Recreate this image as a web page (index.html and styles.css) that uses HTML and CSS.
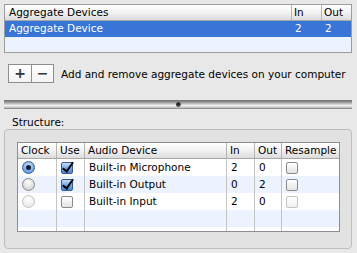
FILE: index.html
```html
<!DOCTYPE html>
<html lang="en">
<head>
    <meta charset="UTF-8">
    <title>Audio MIDI Setup</title>
    <link rel="stylesheet" href="styles.css">
</head>
<body>
    <div class="pane">
        <div class="list devices">
            <div class="row head">
                <div class="cell">Aggregate Devices</div>
                <div class="cell sep">In</div>
                <div class="cell sep">Out</div>
            </div>
            <div class="row selected">
                <div class="cell">Aggregate Device</div>
                <div class="cell">2</div>
                <div class="cell">2</div>
            </div>
            <div class="row alt short"></div>
        </div>

        <div class="toolbar">
            <div class="btns">
                <div class="btn">+</div>
                <div class="btn">&minus;</div>
            </div>
            <span class="hint">Add and remove aggregate devices on your computer</span>
        </div>

        <div class="splitter"><span class="dimple"></span></div>

        <div class="label">Structure:</div>
        <div class="group">
            <div class="list structure">
                <div class="row head">
                    <div class="cell">Clock</div>
                    <div class="cell sep">Use</div>
                    <div class="cell sep">Audio Device</div>
                    <div class="cell sep">In</div>
                    <div class="cell sep">Out</div>
                    <div class="cell sep">Resample</div>
                </div>
                <div class="row">
                    <div class="cell ctl"><span class="radio on"></span></div>
                    <div class="cell ctl"><span class="check on"></span></div>
                    <div class="cell">Built-in Microphone</div>
                    <div class="cell">2</div>
                    <div class="cell">0</div>
                    <div class="cell ctl"><span class="check"></span></div>
                </div>
                <div class="row alt">
                    <div class="cell ctl"><span class="radio"></span></div>
                    <div class="cell ctl"><span class="check on"></span></div>
                    <div class="cell">Built-in Output</div>
                    <div class="cell">0</div>
                    <div class="cell">2</div>
                    <div class="cell ctl"><span class="check"></span></div>
                </div>
                <div class="row">
                    <div class="cell ctl"><span class="radio off"></span></div>
                    <div class="cell ctl"><span class="check"></span></div>
                    <div class="cell">Built-in Input</div>
                    <div class="cell">2</div>
                    <div class="cell">0</div>
                    <div class="cell ctl"><span class="check off"></span></div>
                </div>
                <div class="row alt">
                    <div class="cell"></div><div class="cell"></div><div class="cell"></div>
                    <div class="cell"></div><div class="cell"></div><div class="cell"></div>
                </div>
                <div class="row filler">
                    <div class="cell"></div><div class="cell"></div><div class="cell"></div>
                    <div class="cell"></div><div class="cell"></div><div class="cell"></div>
                </div>
            </div>
        </div>
    </div>
</body>
</html>
```

FILE: styles.css
```css
* {
    margin: 0;
    padding: 0;
    box-sizing: border-box;
}

body {
    font-family: "DejaVu Sans", Verdana, sans-serif;
    font-size: 10.5px;
    background-color: #e8e8e8;
    color: #000;
}

.pane {
    width: 357px;
    height: 253px;
    padding: 4px 5px 0 4px;
}

.list {
    background-color: #fff;
    border: 1px solid #9c9c9c;
}

.row {
    display: grid;
    height: 16px;
    align-items: center;
}

.row.short {
    height: 15px;
}

.devices .row {
    grid-template-columns: 286px 30px 1fr;
}

.row.head {
    height: 16px;
    background: linear-gradient(#ffffff, #f2f2f2 50%, #dcdcdc);
    border-bottom: 1px solid #a8a8a8;
}

.row .cell {
    height: 100%;
    padding-left: 4px;
    line-height: 15px;
    white-space: nowrap;
    overflow: hidden;
}

.row.head .cell.sep {
    border-left: 1px solid #b4b4b4;
    padding-left: 2px;
}

.row.selected {
    background-color: #3875d7;
    color: #fff;
}

.row.alt {
    background-color: #edf3fe;
}

.toolbar {
    display: flex;
    align-items: center;
    margin-top: 11px;
    padding-left: 4px;
}

.btns {
    display: flex;
    height: 19px;
    border: 1px solid #8e8e8e;
    background: linear-gradient(#ffffff, #f3f3f3);
}

.btn {
    width: 22px;
    text-align: center;
    font-size: 14px;
    font-weight: bold;
    line-height: 17px;
    color: #333;
}

.btn + .btn {
    border-left: 1px solid #8e8e8e;
}

.hint {
    margin-left: 7px;
    white-space: nowrap;
}

.splitter {
    margin-top: 17px;
    height: 9px;
    position: relative;
    background: linear-gradient(#6f6f6f, #8c8c8c 20%, #c8c8c8 45%, #f2f2f2 60%, #cfcfcf 80%, #7a7a7a);
}

.dimple {
    position: absolute;
    left: 172px;
    top: 2px;
    width: 5px;
    height: 5px;
    border-radius: 50%;
    background: radial-gradient(circle at 40% 40%, #111, #555 60%, #fff);
}

.label {
    margin-top: 8px;
    padding-left: 8px;
    height: 11px;
    line-height: 11px;
}

.group {
    margin-top: 1px;
    height: 120px;
    border: 1px solid #bdbdbd;
    border-radius: 4px;
    background-color: #e2e2e2;
    padding: 12px 0 0 12px;
}

.structure {
    width: 323px;
    border-color: #8e8e8e;
}

.structure .row {
    grid-template-columns: 38px 28px 142px 28px 27px 1fr;
    height: 17px;
}

.structure .row.head {
    height: 16px;
}

.structure .row:not(.head) .cell + .cell {
    border-left: 1px solid #c4c4c4;
}

.structure .row .cell {
    line-height: 17px;
    padding-left: 4px;
}

.structure .row.head .cell {
    line-height: 15px;
    padding-left: 3px;
}

.structure .row.filler {
    height: 4px;
}

.cell.ctl {
    display: flex;
    align-items: center;
    padding-left: 5px;
}

.radio {
    display: block;
    width: 13px;
    height: 13px;
    border-radius: 50%;
    border: 1px solid #8a8a8a;
    background: radial-gradient(circle at 50% 30%, #ffffff, #d8d8d8 70%, #b8b8b8);
    position: relative;
}

.radio.on {
    border-color: #3b5f94;
    background: radial-gradient(circle at 50% 35%, #d4e6fb, #7fb0ea 55%, #3b7fd9);
}

.radio.on::after {
    content: "";
    position: absolute;
    left: 3px;
    top: 3px;
    width: 5px;
    height: 5px;
    border-radius: 50%;
    background-color: #111c33;
}

.radio.off {
    border-color: #c2c2c2;
    background: radial-gradient(circle at 50% 30%, #ffffff, #ececec 70%, #dddddd);
}

.check {
    display: block;
    width: 12px;
    height: 12px;
    border: 1px solid #8a8a8a;
    border-radius: 2px;
    background: linear-gradient(#ffffff, #e4e4e4);
    position: relative;
}

.check.on {
    border-color: #35598c;
    background: linear-gradient(#c8def8, #6fa5e6 55%, #4a8ae0);
}

.check.on::after {
    content: "";
    position: absolute;
    left: 3px;
    top: -3px;
    width: 4px;
    height: 10px;
    border-right: 2px solid #000;
    border-bottom: 2px solid #000;
    transform: rotate(35deg);
}

.check.off {
    border-color: #c4c4c4;
    background: linear-gradient(#ffffff, #f0f0f0);
}
```
